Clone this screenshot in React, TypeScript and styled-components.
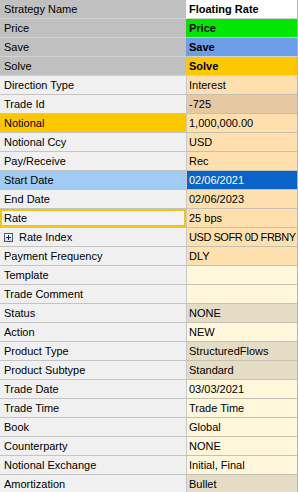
import React from 'react';
import styled, { createGlobalStyle } from 'styled-components';

const GlobalStyle = createGlobalStyle`
  html, body {
    margin: 0;
    padding: 0;
    background: #f0f0f0;
    overflow: hidden;
  }
  body {
    font-family: "Liberation Sans", Arial, sans-serif;
    font-size: 11px;
    color: #000;
  }
`;

type LabelTone = 'header' | 'plain' | 'notional' | 'selected' | 'focused';
type ValueTone =
  | 'white'
  | 'green'
  | 'blue'
  | 'gold'
  | 'peach'
  | 'tan'
  | 'selected'
  | 'cream'
  | 'beige';

interface Field {
  label: string;
  value: string;
  labelTone?: LabelTone;
  valueTone: ValueTone;
  bold?: boolean;
  expandable?: boolean;
  tight?: boolean;
}

const fields: Field[] = [
  { label: 'Strategy Name', value: 'Floating Rate', labelTone: 'header', valueTone: 'white', bold: true },
  { label: 'Price', value: 'Price', labelTone: 'header', valueTone: 'green', bold: true },
  { label: 'Save', value: 'Save', labelTone: 'header', valueTone: 'blue', bold: true },
  { label: 'Solve', value: 'Solve', labelTone: 'header', valueTone: 'gold', bold: true },
  { label: 'Direction Type', value: 'Interest', valueTone: 'peach' },
  { label: 'Trade Id', value: '-725', valueTone: 'tan' },
  { label: 'Notional', value: '1,000,000.00', labelTone: 'notional', valueTone: 'peach' },
  { label: 'Notional Ccy', value: 'USD', valueTone: 'peach' },
  { label: 'Pay/Receive', value: 'Rec', valueTone: 'peach' },
  { label: 'Start Date', value: '02/06/2021', labelTone: 'selected', valueTone: 'selected' },
  { label: 'End Date', value: '02/06/2023', valueTone: 'peach' },
  { label: 'Rate', value: '25 bps', labelTone: 'focused', valueTone: 'peach' },
  { label: 'Rate Index', value: 'USD SOFR 0D FRBNY', valueTone: 'peach', expandable: true, tight: true },
  { label: 'Payment Frequency', value: 'DLY', valueTone: 'peach' },
  { label: 'Template', value: '', valueTone: 'cream' },
  { label: 'Trade Comment', value: '', valueTone: 'cream' },
  { label: 'Status', value: 'NONE', valueTone: 'beige' },
  { label: 'Action', value: 'NEW', valueTone: 'cream' },
  { label: 'Product Type', value: 'StructuredFlows', valueTone: 'beige' },
  { label: 'Product Subtype', value: 'Standard', valueTone: 'beige' },
  { label: 'Trade Date', value: '03/03/2021', valueTone: 'cream' },
  { label: 'Trade Time', value: 'Trade Time', valueTone: 'cream' },
  { label: 'Book', value: 'Global', valueTone: 'cream' },
  { label: 'Counterparty', value: 'NONE', valueTone: 'cream' },
  { label: 'Notional Exchange', value: 'Initial, Final', valueTone: 'cream' },
  { label: 'Amortization', value: 'Bullet', valueTone: 'beige' },
];

const labelBg: Record<LabelTone, string> = {
  header: '#c0c0c0',
  plain: '#f0f0f0',
  notional: '#fec800',
  selected: '#9fcbf4',
  focused: '#f4f4f4',
};

const valueBg: Record<ValueTone, string> = {
  white: '#ffffff',
  green: '#00e600',
  blue: '#6d9ee8',
  gold: '#fec800',
  peach: '#fedfae',
  tan: '#e6c9a2',
  selected: '#0a64c8',
  cream: '#fff7dc',
  beige: '#e4dcc4',
};

const Grid = styled.div`
  width: 298px;
  display: flex;
  flex-direction: column;
`;

const Row = styled.div`
  display: grid;
  grid-template-columns: 186px 1fr;
  height: 19px;
`;

const Label = styled.div<{ $tone: LabelTone }>`
  box-sizing: border-box;
  display: flex;
  align-items: center;
  gap: 6px;
  padding-left: 4px;
  background: ${(p) => labelBg[p.$tone]};
  border-bottom: 1px solid ${(p) => (p.$tone === 'header' ? '#d2d2d2' : '#c4c4c4')};
  box-shadow: ${(p) => (p.$tone === 'focused' ? 'inset 0 0 0 2px #f2c31c' : 'none')};
  white-space: nowrap;
  overflow: hidden;
`;

const Value = styled.div<{ $tone: ValueTone; $bold?: boolean; $tight?: boolean }>`
  box-sizing: border-box;
  display: flex;
  align-items: center;
  padding-left: 2px;
  background: ${(p) => valueBg[p.$tone]};
  color: ${(p) => (p.$tone === 'selected' ? '#ffffff' : '#000000')};
  font-weight: ${(p) => (p.$bold ? 700 : 400)};
  letter-spacing: ${(p) => (p.$tight ? '-0.45px' : 'normal')};
  border-left: 1px solid ${(p) => (p.$bold ? 'transparent' : '#c8c8c8')};
  border-right: 1px solid #b4b4b4;
  border-bottom: 1px solid ${(p) => (p.$bold ? '#d2d2d2' : '#c6c0b2')};
  white-space: nowrap;
  overflow: hidden;
`;

const ExpandBox = styled.span`
  box-sizing: border-box;
  width: 9px;
  height: 9px;
  border: 1px solid #4a5a78;
  background: linear-gradient(#ffffff, #c9d6ea);
  display: inline-flex;
  align-items: center;
  justify-content: center;
  svg {
    display: block;
  }
`;

const PlusIcon = () => (
  <ExpandBox>
    <svg width="7" height="7" viewBox="0 0 7 7">
      <path d="M1 3.5h5M3.5 1v5" stroke="#1b2a4a" strokeWidth="1" />
    </svg>
  </ExpandBox>
);

export default function App() {
  return (
    <>
      <GlobalStyle />
      <Grid>
        {fields.map((f) => (
          <Row key={f.label}>
            <Label $tone={f.labelTone ?? 'plain'}>
              {f.expandable && <PlusIcon />}
              {f.label}
            </Label>
            <Value $tone={f.valueTone} $bold={f.bold} $tight={f.tight}>
              {f.value}
            </Value>
          </Row>
        ))}
      </Grid>
    </>
  );
}
